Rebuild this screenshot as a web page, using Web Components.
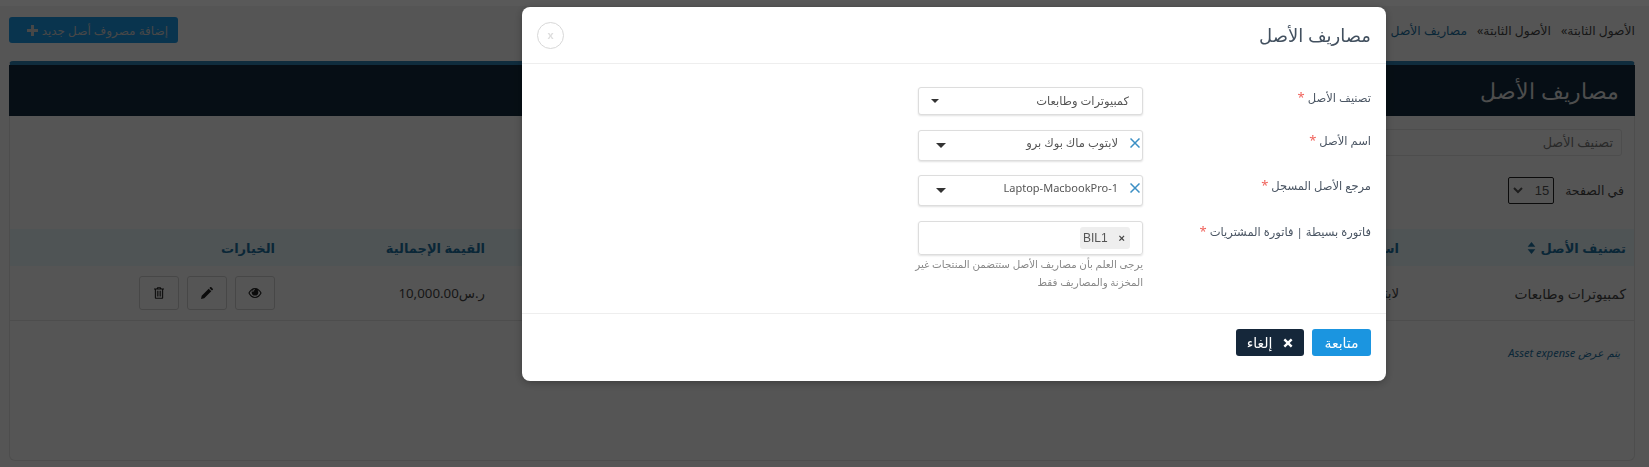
<!DOCTYPE html>
<html lang="ar" dir="rtl">
<head>
  <meta charset="UTF-8">
  <title>مصاريف الأصل</title>
  <style>
    html, body {
      margin: 0;
      height: 100%;
      overflow: hidden;
      background: #f4f4f4;
      font-family: "Noto Sans", "DejaVu Sans", sans-serif;
      font-size: 13px;
    }
  </style>
</head>
<body>
<asset-page></asset-page>
<asset-modal></asset-modal>
<script type="text/javascript">

const ICONS = {
  plus: '<svg viewBox="0 0 12 12" width="11" height="11"><path fill="currentColor" d="M4.4 0h3.2v4.4H12v3.2H7.6V12H4.4V7.6H0V4.4h4.4z"/></svg>',
  times: '<svg viewBox="0 0 12 12" width="10" height="10"><path fill="currentColor" d="M2.6.6 6 4l3.4-3.4 2 2L8 6l3.4 3.4-2 2L6 8l-3.4 3.4-2-2L4 6 .6 2.600z"/></svg>',
  eye: '<svg viewBox="0 0 16 12" width="14" height="10"><path fill="currentColor" fill-rule="evenodd" d="M0 6c1.700-3.600 4.600-6 8-6s6.300 2.400 8 6c-1.700 3.600-4.600 6-8 6S1.700 9.600 0 6zm1.500 0C3 8.700 5.300 10.700 8 10.700s5-2 6.500-4.700c-.9-1.500-2-2.800-3.400-3.600.6.700.9 1.600.9 2.600a4 4 0 1 1-8 0c0-1 .3-1.900.9-2.600C3.500 3.200 2.400 4.500 1.500 6zM8 2.200a.6.6 0 0 0-.6-.6C6 1.600 4.900 2.800 4.900 4.100a.6.6 0 0 0 1.200 0c0-.7.600-1.300 1.300-1.300.3 0 .6-.3.600-.6z"/></svg>',
  pencil: '<svg viewBox="0 0 14 14" width="12" height="12"><path fill="currentColor" d="M0 14l.8-3.800L9 2l3 3-8.200 8.200zM9.800 1.200 10.700.3a1 1 0 0 1 1.400 0l1.600 1.600a1 1 0 0 1 0 1.400l-.9.900z"/></svg>',
  trash: '<svg viewBox="0 0 12 14" width="10" height="12"><path fill="currentColor" fill-rule="evenodd" d="M4 0h4l1 1.600h3v1.300h-1V13a1 1 0 0 1-1 1H2a1 1 0 0 1-1-1V2.900H0V1.600h3zM5 1.600h2L6.700 1H5.300zM2.300 2.900v9.800h7.400V2.900zM3.500 4.300h1v7h-1zM5.500 4.300h1v7h-1zM7.500 4.300h1v7h-1z"/></svg>',
  sort: '<svg viewBox="0 0 10 14" width="9" height="12"><path fill="currentColor" d="M5 0l4.500 5.500H.5zM5 14 .5 8.500h9z"/></svg>',
  chevron: '<svg viewBox="0 0 10 7" width="10" height="7"><path fill="none" stroke="currentColor" stroke-width="2" d="M1 1l4 4 4-4"/></svg>'
};

class AssetButton extends HTMLElement {
  constructor() {
    super();
    const shadow = this.attachShadow({ mode: 'open' });
    shadow.innerHTML = `
      <style>
        :host {
          display: inline-flex;
          align-items: center;
          justify-content: center;
          gap: 4px;
          height: 27px;
          box-sizing: border-box;
          border-radius: 3px;
          font-size: 14px;
          white-space: nowrap;
          cursor: pointer;
          background: var(--btn-bg, #1b95e0);
          color: var(--btn-fg, #fff);
        }
        ::slotted(svg) { display: block; }
      </style>
      <slot></slot>
    `;
  }
}
customElements.define('asset-button', AssetButton);

class AssetSelect extends HTMLElement {
  constructor() {
    super();
    const shadow = this.attachShadow({ mode: 'open' });
    const clearable = this.hasAttribute('clearable');
    shadow.innerHTML = `
      <style>
        :host {
          display: block;
          box-sizing: border-box;
          position: relative;
          height: ${clearable ? 31 : 28}px;
          border: 1px solid #ddd;
          border-radius: 3px;
          box-shadow: 0 1px 2px rgba(0,0,0,.12);
          background: #fff;
          color: #555;
          font-size: 11.500px;
        }
        .value {
          display: block;
          line-height: ${clearable ? 24 : 25}px;
          padding-right: ${clearable ? 24 : 13}px;
          white-space: nowrap;
        }
        .arrow {
          position: absolute;
          left: ${clearable ? 17 : 12}px;
          top: ${clearable ? 12 : 11}px;
          width: 0;
          height: 0;
          border-style: solid;
          border-color: #333 transparent transparent;
          border-width: ${clearable ? '5px 5px 0' : '4px 4px 0'};
        }
        .clear {
          position: absolute;
          right: 2px;
          top: 7px;
          color: #3b8fc4;
          display: ${clearable ? 'block' : 'none'};
        }
        .clear svg { display: block; }
        ::slotted(span) { font-size: 11px; }
      </style>
      <span class="value"><slot></slot></span>
      <span class="arrow"></span>
      <span class="clear"><svg viewBox="0 0 10 10" width="10" height="10"><path stroke="currentColor" stroke-width="1.500" d="M.5.500l9 9M9.500.500l-9 9"/></svg></span>
    `;
  }
}
customElements.define('asset-select', AssetSelect);

class FormRow extends HTMLElement {
  constructor() {
    super();
    const shadow = this.attachShadow({ mode: 'open' });
    shadow.innerHTML = `
      <style>
        :host {
          display: grid;
          grid-template-columns: 211px 225px;
          column-gap: 17px;
          color: #4a5563;
          font-size: 11.500px;
        }
        label { display: block; line-height: 20px; white-space: nowrap; }
        b { color: #f0635c; font-weight: 400; font-size: 13px; }
      </style>
      <label>${this.getAttribute('label')} <b>*</b></label>
      <div><slot></slot></div>
    `;
  }
}
customElements.define('form-row', FormRow);

class AssetModal extends HTMLElement {
  constructor() {
    super();
    const shadow = this.attachShadow({ mode: 'open' });
    shadow.innerHTML = `
      <style>
        :host {
          display: block;
          position: fixed;
          inset: 0;
          background: rgba(0,0,0,.65);
        }
        .dialog {
          position: absolute;
          left: 522px;
          top: 7px;
          width: 864px;
          height: 374px;
          box-sizing: border-box;
          background: #fff;
          border-radius: 8px;
          box-shadow: 0 2px 8px rgba(0,0,0,.3);
          display: flex;
          flex-direction: column;
        }
        header {
          height: 57px;
          box-sizing: border-box;
          border-bottom: 1px solid #eee;
          display: flex;
          align-items: center;
          justify-content: space-between;
          padding: 0 15px;
        }
        h2 { margin: 0; font-size: 18px; font-weight: 400; color: #42505f; }
        .close {
          width: 27px;
          height: 27px;
          box-sizing: border-box;
          border: 1px solid #d8d8d8;
          border-radius: 50%;
          color: #ddd;
          font-size: 11px;
          font-weight: 700;
          display: flex;
          align-items: center;
          justify-content: center;
          font-family: "Liberation Sans", sans-serif;
        }
        .content {
          flex: 1;
          display: flex;
          flex-direction: column;
          padding: 23px 15px 0;
        }
        form-row { margin-bottom: 14.500px; }
        form-row.last { margin-bottom: 0; }
        .chips {
          box-sizing: border-box;
          height: 34px;
          border: 1px solid #ddd;
          border-radius: 3px;
          box-shadow: 0 1px 2px rgba(0,0,0,.12);
          padding: 5px 12px;
          display: flex;
        }
        .chip {
          width: 50px;
          height: 22px;
          box-sizing: border-box;
          background: #eee;
          border-radius: 3px;
          color: #555;
          font: 12px/22px "Liberation Sans", sans-serif;
          direction: ltr;
          padding-left: 3px;
          display: flex;
          justify-content: space-between;
        }
        .chip i { font-style: normal; font-weight: 700; margin-right: 5px; color: #444; font-size: 11px; }
        .help {
          margin: 0;
          font-size: 10.300px;
          line-height: 18px;
          color: #888;
          white-space: nowrap;
        }
        footer {
          height: 68px;
          box-sizing: border-box;
          border-top: 1px solid #eee;
          display: flex;
          gap: 8px;
          padding: 15px 15px 0;
        }
        .go { width: 59px; }
        .cancel { width: 68px; --btn-bg: #15273a; gap: 11px; }
      </style>
      <div class="dialog">
        <header>
          <h2>مصاريف الأصل</h2>
          <span class="close">x</span>
        </header>
        <div class="content">
          <form-row label="تصنيف الأصل"><asset-select>كمبيوترات وطابعات</asset-select></form-row>
          <form-row label="اسم الأصل"><asset-select clearable>لابتوب ماك بوك برو</asset-select></form-row>
          <form-row label="مرجع الأصل المسجل"><asset-select clearable><span dir="ltr">Laptop-MacbookPro-1</span></asset-select></form-row>
          <form-row class="last" label="فاتورة بسيطة | فاتورة المشتريات">
            <div class="chips"><span class="chip">BIL1<i>×</i></span></div>
            <p class="help">يرجى العلم بأن مصاريف الأصل ستتضمن المنتجات غير<br>المخزنة والمصاريف فقط</p>
          </form-row>
        </div>
        <footer>
          <asset-button class="go">متابعة</asset-button>
          <asset-button class="cancel">${ICONS.times}<span>إلغاء</span></asset-button>
        </footer>
      </div>
    `;
  }
}
customElements.define('asset-modal', AssetModal);

class AssetTable extends HTMLElement {
  constructor() {
    super();
    const shadow = this.attachShadow({ mode: 'open' });
    shadow.innerHTML = `
      <style>
        :host { display: block; }
        table { width: 100%; table-layout: fixed; border-collapse: collapse; }
        th {
          height: 37px;
          padding: 0 8px;
          background: #e3f0f3;
          color: #1d6f9f;
          font-size: 13px;
          font-weight: 700;
          text-align: right;
        }
        td {
          height: 54px;
          padding: 0 8px;
          border-bottom: 1px solid #ddd;
          color: #444;
          font-size: 13.300px;
          white-space: nowrap;
        }
        td:first-child { font-size: 13.800px; }
        th svg { vertical-align: -1px; margin-right: 1px; }
        .tools { display: flex; gap: 8px; }
        .tool {
          width: 40px;
          height: 34px;
          box-sizing: border-box;
          border: 1px solid #ccc;
          border-radius: 3px;
          color: #222;
          display: flex;
          align-items: center;
          justify-content: center;
        }
      </style>
      <table>
        <colgroup><col style="width:227px"><col style="width:457px"><col style="width:457px"><col style="width:210px"><col></colgroup>
        <thead>
          <tr>
            <th>تصنيف الأصل ${ICONS.sort}</th>
            <th>اسم الأصل</th>
            <th>مرجع الأصل المسجل</th>
            <th>القيمة الإجمالية</th>
            <th>الخيارات</th>
          </tr>
        </thead>
        <tbody>
          <tr>
            <td>كمبيوترات وطابعات</td>
            <td>لابتوب ماك بوك برو</td>
            <td>Laptop-MacbookPro-1</td>
            <td>ر.س10,000.00</td>
            <td><div class="tools">
              <span class="tool">${ICONS.eye}</span>
              <span class="tool">${ICONS.pencil}</span>
              <span class="tool">${ICONS.trash}</span>
            </div></td>
          </tr>
        </tbody>
      </table>
    `;
  }
}
customElements.define('asset-table', AssetTable);

class AssetPage extends HTMLElement {
  constructor() {
    super();
    const shadow = this.attachShadow({ mode: 'open' });
    shadow.innerHTML = `
      <style>
        :host {
          display: block;
          padding: 0 14px 6px 9px;
          color: #444;
        }
        .band {
          height: 6px;
          margin: 0 -14px 11px -9px;
          background: #fff;
        }
        .toolbar {
          height: 26px;
          margin-bottom: 18px;
          display: flex;
          align-items: center;
          justify-content: space-between;
        }
        .crumbs { display: flex; gap: 10px; font-size: 12.300px; color: #444; white-space: nowrap; }
        .crumbs a { color: #1d6f9f; }
        .add { width: 169px; height: 26px; font-size: 12px; gap: 4px; --btn-fg: #ccc; justify-content: flex-start; padding: 0 10px; box-sizing: border-box; }
        .card {
          height: 400px;
          box-sizing: border-box;
          border: 1px solid #ddd;
          border-top: 4px solid #2d7eae;
          border-radius: 4px 4px 6px 6px;
        }
        .head {
          height: 51px;
          margin: 0 -1px;
          padding: 0 16px;
          background: #122a3c;
          color: #ddd;
          font-size: 22px;
          font-weight: 300;
          line-height: 50px;
        }
        .filter {
          margin: 13px 12px 0 0;
          width: 500px;
          height: 27px;
          box-sizing: border-box;
          border: 1px solid #ddd;
          border-radius: 3px;
          padding: 0 8px;
          font-size: 12.800px;
          line-height: 25px;
          color: #777;
        }
        .perpage {
          margin: 21px 10px 26px 0;
          height: 26px;
          display: flex;
          align-items: center;
          gap: 11px;
          font-size: 12.500px;
        }
        .size {
          width: 46px;
          height: 27px;
          box-sizing: border-box;
          border: 1px solid #222;
          border-radius: 2px;
          display: flex;
          align-items: center;
          justify-content: space-between;
          padding: 0 4px 0 4px;
          color: #555;
          font: 13px "Liberation Sans", sans-serif;
        }
        .size svg { display: block; }
        .note {
          margin: 24px 14px 0 0;
          font-size: 11px;
          font-style: italic;
          color: #1d6f9f;
        }
      </style>
      <div class="band"></div>
      <div class="toolbar">
        <div class="crumbs"><span>الأصول الثابتة»</span><span>الأصول الثابتة»</span><a>مصاريف الأصل</a></div>
        <asset-button class="add"><span>إضافة مصروف أصل جديد</span>${ICONS.plus}</asset-button>
      </div>
      <div class="card">
        <div class="head">مصاريف الأصل</div>
        <div class="filter">تصنيف الأصل</div>
        <div class="perpage">في الصفحة <span class="size"><span>15</span>${ICONS.chevron}</span></div>
        <asset-table></asset-table>
        <div class="note">يتم عرض <span dir="ltr">Asset expense</span></div>
      </div>
    `;
  }
}
customElements.define('asset-page', AssetPage);

</script>
</body>
</html>
